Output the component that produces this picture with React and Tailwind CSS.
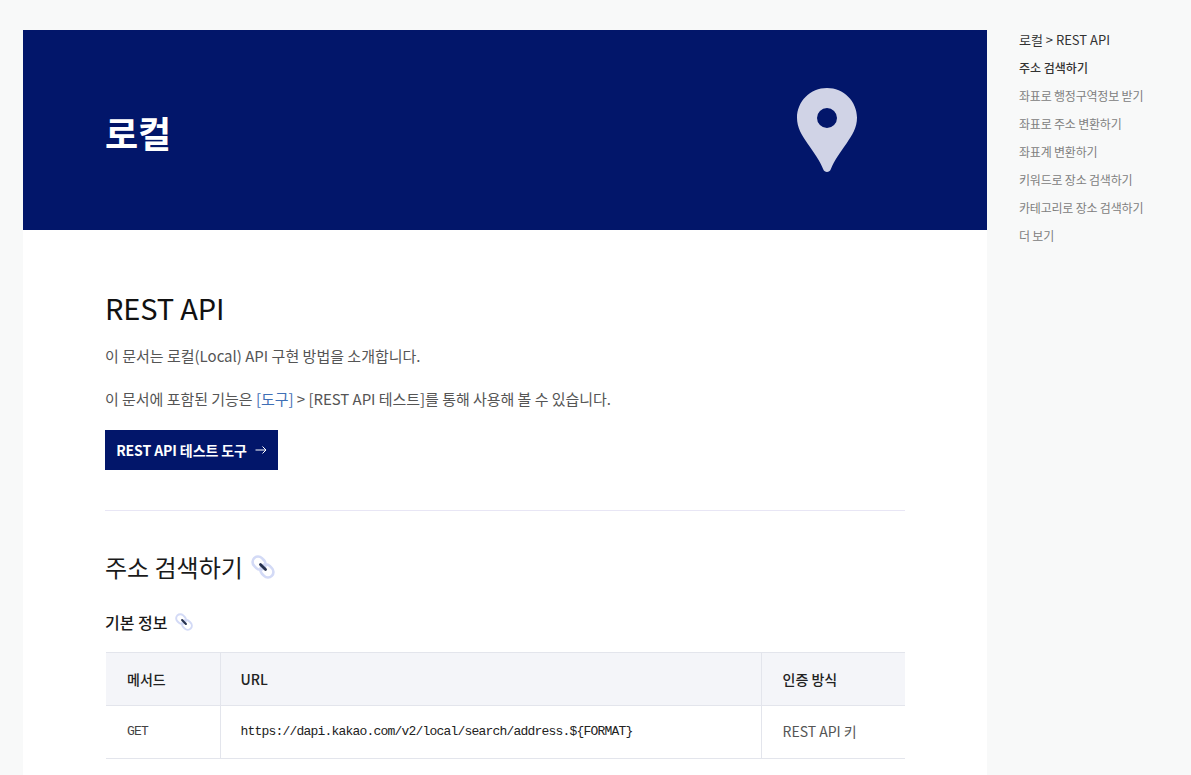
const FONT = "font-['Noto_Sans_CJK_KR','Noto_Sans',sans-serif]";
const MONO = "font-['Liberation_Mono','Noto_Sans_CJK_KR',monospace]";

const toc = [
  "주소 검색하기",
  "좌표로 행정구역정보 받기",
  "좌표로 주소 변환하기",
  "좌표계 변환하기",
  "키워드로 장소 검색하기",
  "카테고리로 장소 검색하기",
  "더 보기",
];

const LinkIcon = ({ size }) => (
  <svg width={size} height={size} viewBox="0 0 24 24" className="shrink-0">
    <g transform="rotate(45 12 12)">
      <rect x="-0.5" y="6.5" width="14" height="11" rx="5.5" fill="none" stroke="#d3daf6" strokeWidth="2.6" />
      <rect x="10.5" y="6.5" width="14" height="11" rx="5.5" fill="none" stroke="#d3daf6" strokeWidth="2.6" />
      <rect x="7" y="10.6" width="10" height="2.8" rx="1.4" fill="#27324f" />
    </g>
  </svg>
);

export default function App() {
  return (
    <div className={`${FONT} h-[775px] overflow-hidden bg-[#f8f9f9] flex items-stretch pl-[23px] pt-[30px]`}>
      <main className="w-[964px] shrink-0 bg-white">
        <header className="h-[200px] bg-[#02166a] pl-[82px] pr-[130px] flex items-center justify-between">
          <h1 className="mt-[3px] text-[36px] font-bold text-white leading-none">로컬</h1>
          <svg width="60" height="84" viewBox="0 0 60 84">
            <path
              fillRule="evenodd"
              fill="#d0d3e6"
              d="M30 0C13.4 0 0 13.3 0 29.8c0 9.8 4.8 17.6 10.5 25.6 5.6 7.8 12.6 17.6 15.6 25.6C27 83.2 28.4 84 30 84s3-0.8 3.9-3c3-8 10-17.8 15.6-25.6C55.2 47.4 60 39.6 60 29.8 60 13.3 46.6 0 30 0Zm0 20a10 10 0 1 1 0 20 10 10 0 0 1 0-20Z"
            />
          </svg>
        </header>
        <div className="px-[82px] pt-[57px]">
          <h2 className="text-[29px] leading-[40px] tracking-[-0.15px] font-normal text-[#111]">REST API</h2>
          <p className="mt-[16px] text-[15px] leading-[26px] text-[#555]">이 문서는 로컬(Local) API 구현 방법을 소개합니다.</p>
          <p className="mt-[17px] text-[15px] leading-[26px] tracking-[-0.04px] text-[#555]">
            이 문서에 포함된 기능은 <span className="text-[#3f6fb5]">[도구]</span> &gt; [REST API 테스트]를 통해 사용해 볼 수 있습니다.
          </p>
          <button className="mt-[18px] h-[40px] w-[173px] bg-[#02166a] text-white text-[14px] tracking-[-0.1px] font-bold flex items-center justify-center gap-[8px]">
            REST API 테스트 도구
            <svg width="12" height="10" viewBox="0 0 12 10" fill="none" stroke="white" strokeWidth="1">
              <path d="M0.5 5H11M7.5 1.5 11 5 7.5 8.5" />
            </svg>
          </button>
          <hr className="mt-[40px] border-[#e8e6f5]" />
          <div className="mt-[38px] flex items-center gap-[8px]">
            <h3 className="text-[24px] leading-[36px] font-normal text-[#1a1a1a]">주소 검색하기</h3>
            <LinkIcon size={24} />
          </div>
          <div className="mt-[25px] flex items-center gap-[8px]">
            <h4 className="text-[16px] leading-[24px] font-medium text-[#1a1a1a]">기본 정보</h4>
            <LinkIcon size={18} />
          </div>
          <table className="mt-[18px] ml-px w-[799px] border-collapse table-fixed text-[14px]">
            <thead>
              <tr className="h-[53px] bg-[#f4f5f9] border-y border-[#e3e5ec] text-left text-[#222]">
                <th className="w-[114px] pl-[21px] font-medium">메서드</th>
                <th className="pl-[20px] font-medium border-l border-[#e3e5ec]">URL</th>
                <th className="w-[144px] pl-[21px] font-medium border-l border-[#e3e5ec]">인증 방식</th>
              </tr>
            </thead>
            <tbody>
              <tr className="h-[53px] border-b border-[#e3e5ec] text-[#444]">
                <td className={`pl-[21px] ${MONO} text-[13px] tracking-[-0.8px]`}>GET</td>
                <td className={`pl-[20px] border-l border-[#e3e5ec] ${MONO} text-[13px] tracking-[-0.8px] text-[#222]`}>https://dapi.kakao.com/v2/local/search/address.${"{FORMAT}"}</td>
                <td className="pl-[21px] pb-[1px] border-l border-[#e3e5ec] text-[#555]">REST API 키</td>
              </tr>
            </tbody>
          </table>
        </div>
      </main>
      <nav className="ml-[32px]">
        <p className="text-[13px] leading-[20px] text-[#333]">로컬 &gt; REST API</p>
        <ul className="mt-[8px] flex flex-col gap-[8px] text-[12px] leading-[20px] tracking-[-0.2px] text-[#808080]">
          {toc.map((item, i) => (
            <li key={item} className={i === 0 ? "font-medium text-[#333] tracking-normal" : ""}>{item}</li>
          ))}
        </ul>
      </nav>
    </div>
  );
}
